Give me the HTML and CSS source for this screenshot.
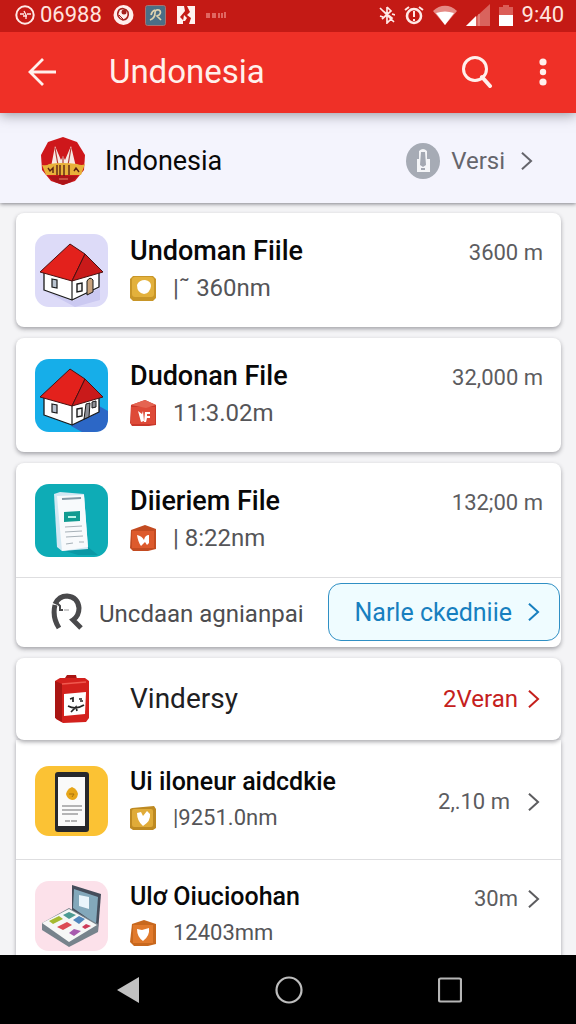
FILE: index.html
```html
<!DOCTYPE html>
<html lang="id">
<head>
<meta charset="utf-8">
<meta name="viewport" content="width=device-width, initial-scale=1">
<title>Undonesia</title>
<link rel="stylesheet" href="styles.css">
</head>
<body>
<svg class="defs" aria-hidden="true">
  <symbol id="chevron" viewBox="0 0 14 22"><path d="M2 2l10 9-10 9" fill="none" stroke="currentColor" stroke-width="2.200"/></symbol>
  <symbol id="house" viewBox="0 0 73 73">
    <path d="M9 36v20l28 10 27-13V35L49 22z" fill="#fff" stroke="#191919" stroke-width="1.3" stroke-linejoin="round"/>
    <path d="M37 47v19" stroke="#191919" stroke-width="1.2"/>
    <path d="M35 10l15 10-13 27L5 38z" fill="#e3211c" stroke="#4a1010" stroke-width="1"/>
    <path d="M50 20l18 18-31 9z" fill="#c91a1a" stroke="#4a1010" stroke-width="1"/>
    <path d="M17 45l5 1v8l-5-1z" fill="#b9c3cf" stroke="#191919" stroke-width="1.2"/>
    <path d="M42 50l5-1v8l-5 1z" fill="#f2f2f2" stroke="#191919" stroke-width="1.4"/>
  </symbol>
</svg>

<header class="top">
  <div class="status">
    <div class="status-left">
      <svg width="20" height="20" viewBox="0 0 20 20"><circle cx="10" cy="10" r="8.7" fill="none" stroke="#ffe9e6" stroke-width="2"/><path d="M5 9h4M12 9h4M9 6l2 4v4M8 11h4" fill="none" stroke="#ffe9e6" stroke-width="1.3"/></svg>
      <span class="status-text">06988</span>
      <svg class="push" width="21" height="20" viewBox="0 0 21 20"><circle cx="10.500" cy="10" r="10" fill="#ffeeec"/><path d="M6 5c-3 5 0 9 4 10 4 0 6-4 5-8-2-4-7-4-9-2z" fill="none" stroke="#a5201c" stroke-width="1.600"/><circle cx="11" cy="7" r="2.500" fill="#a5201c"/><path d="M6 10l4 4" stroke="#a5201c"/></svg>
      <svg class="push" width="21" height="21" viewBox="0 0 21 21"><rect x=".5" y=".5" width="20" height="20" rx="2" fill="#4b6f86" stroke="#a67472"/><path d="M5 15q5-2 5-7 0-4 4-3 3 2 0 5l-2 1 4 4" fill="none" stroke="#ddd3b0" stroke-width="1.700"/><path d="M6 10q1-4 4-5" fill="none" stroke="#ddd3b0" stroke-width="1.700"/></svg>
      <svg class="push" width="18" height="18" viewBox="0 0 18 18"><path fill="#fff2f0" d="M0 0h7l1 5-5 6 3 3v4H0zM10 0h8v18h-6l2-6-4-3 3-3z"/><path d="M7 9l3 3-2 3H6z" fill="#fff2f0"/></svg>
      <svg class="push" width="20" height="6" viewBox="0 0 20 6"><path d="M1 1v5M3 1v5M7 1v5M9 1v5M13 1v5M16 1v5M19 0v6" stroke="#f0908a" stroke-width="1.300"/></svg>
    </div>
    <div class="status-right">
      <svg width="16" height="18" viewBox="0 0 16 18"><path d="M1 2l14 14M8 1v16l5-5-9-7M8 1l4 4-9 8M1 10l3 1M13 8l3 1" fill="none" stroke="#ffe9e6" stroke-width="1.700"/></svg>
      <svg width="20" height="20" viewBox="0 0 20 20"><circle cx="10" cy="11" r="7" fill="none" stroke="#ffe9e6" stroke-width="2.600"/><path d="M1 5l4-3M19 5l-4-3M10 6v6M10 14v2" stroke="#ffe9e6" stroke-width="2"/></svg>
      <svg width="24" height="20" viewBox="0 0 24 20"><path d="M0 6c7-7 17-7 24 0L12 20z" fill="#e58a85"/><path d="M3 8c6-2 12-2 18 0l-9 12z" fill="#fff"/></svg>
      <svg width="24" height="22" viewBox="0 0 24 22"><path d="M24 0v22H0z" fill="#d9635d"/><path d="M10 12v10H0z" fill="#fff"/><path d="M13 10v12" stroke="#efa09b"/></svg>
      <svg width="14" height="21" viewBox="0 0 14 21"><path d="M4 0h6v2h4v9H0V2h4z" fill="#db5d57"/><path d="M0 10h14v11H0z" fill="#fff"/></svg>
      <span class="status-text">9:40</span>
    </div>
  </div>
  <div class="appbar">
    <button class="icon-btn" aria-label="Back"><svg width="28" height="28" viewBox="0 0 28 28"><path d="M15 1L2 14l13 13M2 14h26" fill="none" stroke="#fff0ec" stroke-width="2.800"/></svg></button>
    <h1 class="appbar-title">Undonesia</h1>
    <button class="icon-btn" aria-label="Search"><svg width="32" height="32" viewBox="0 0 32 32"><circle cx="14" cy="13" r="11.500" fill="none" stroke="#fff0ec" stroke-width="3"/><path d="M21 21l8 9" stroke="#fff0ec" stroke-width="4" stroke-linecap="round"/></svg></button>
    <button class="icon-btn menu-btn" aria-label="More"><svg width="8" height="28" viewBox="0 0 8 28"><g fill="#fff0ec"><circle cx="4" cy="4" r="3.600"/><circle cx="4" cy="14" r="3.200"/><circle cx="4" cy="24" r="3.600"/></g></svg></button>
  </div>
</header>

<section class="country">
  <svg width="46" height="48" viewBox="0 0 46 48"><path d="M23 0l14 5 8 13-1 15-9 11-12 4-12-4L2 33 1 18 8 5z" fill="#ce171b"/><path d="M11 30l4-21 6 14 2-4 2 4 6-14 5 21z" fill="#f7e9e4"/><path d="M15 11l3 17M23 20v8M31 11l-3 17" stroke="#b23b35" stroke-width="1.200"/><path d="M2 28q5 1 7-1 13-2 28 0 5 2 8 0l-4 11H6z" fill="#e8b13a"/><path d="M8 31l2 3 3-3v5M17 28v10M20 28v11M24 28v11M29 28v10M34 34l2-3 3 4" fill="none" stroke="#5c2214" stroke-width="1.400"/><path d="M8 39h30l-7 6-8 3-8-3z" fill="#ad1419"/><path d="M19 42h9" stroke="#e78a68"/></svg>
  <h2 class="country-name">Indonesia</h2>
  <button class="version"><svg width="34" height="36" viewBox="0 0 34 36"><ellipse cx="17" cy="18" rx="17" ry="18" fill="#a6abb5"/><path d="M13 8q4-4 8 0v8h3v13H11V16h2z" fill="#f4f5f8"/><path d="M15 9h4l1 13-3 2-3-2zM15 25h4v2h-4z" fill="#a3a8b2"/></svg>Versi<svg class="chev chev-version"><use href="#chevron"/></svg></button>
</section>

<main class="list">
  <article class="card">
    <div class="row">
      <svg class="app" viewBox="0 0 73 73"><rect width="73" height="73" rx="14" fill="#dddbf8"/><path d="M12 58l26 9 27-13v12L40 73z" fill="#cbc9f1"/><use href="#house"/><path d="M52 61V47q3-5 6-1v12z" fill="#c8a27c" stroke="#191919"/></svg>
      <div class="info"><h3 class="name">Undoman Fiile</h3>
        <p class="meta"><svg class="badge" viewBox="0 0 26 26"><path d="M3 1h20l3 3v19l-3 3H3l-3-3V4z" fill="#c89628"/><rect x="2" y="2" width="22" height="20" rx="3" fill="#e3b13c"/><path d="M7 10q2-5 8-5 6 1 6 6-1 7-7 8-7-1-7-9z" fill="#fff"/></svg>|˜ 360nm</p></div>
      <span class="size">3600 m</span>
    </div>
  </article>

  <article class="card">
    <div class="row">
      <svg class="app" viewBox="0 0 73 73"><rect width="73" height="73" rx="14" fill="#16aee9"/><path d="M36 67l28-20 9 5v7q0 14-14 14H47z" fill="#2c67c6"/><use href="#house"/><path d="M49 60l2-15 4-1-1 14zM57 43l4-1v6l-4 1z" fill="#8d8f96" stroke="#191919"/></svg>
      <div class="info"><h3 class="name">Dudonan File</h3>
        <p class="meta"><svg class="badge" viewBox="0 0 26 26"><path d="M1 5l14-5 11 5v20l-7 1H2l-2-3z" fill="#c9372a"/><path d="M1 7h24v17H1z" fill="#de4a38"/><path d="M1 5l14-5 11 5-10 3z" fill="#e56451"/><path d="M8 11l4 3 1-3 1 10-3 1zM15 12h5v2h-3v2h3v2h-3l-1 4h-2z" fill="#fff"/></svg>11:3.02m</p></div>
      <span class="size">32,000 m</span>
    </div>
  </article>

  <article class="card">
    <div class="row">
      <svg class="app" viewBox="0 0 73 73"><rect width="73" height="73" rx="14" fill="#0eacb6"/><path d="M27 66l26-3 10 8H43z" fill="#0a98a5"/><path d="M19 10l6-2 24 2 4 55-26 2-5-4z" fill="#d2e8f3"/><path d="M22 12l27-1 4 52-26 4z" fill="#f8fafc"/><path d="M27 15l19-1" stroke="#8499a6" stroke-width="2"/><path d="M29 28l16-1v10l-16 1z" fill="#119b91"/><path d="M33 33h8" stroke="#b9f3e9" stroke-width="2"/><path d="M30 43l17-1M30 48l17-1M31 53l17-1M31 60l7-1M44 58h5" stroke="#a7b1b8" stroke-width="1.200"/></svg>
      <div class="info"><h3 class="name">Diieriem File</h3>
        <p class="meta"><svg class="badge" viewBox="0 0 26 26"><path d="M1 5l14-5 11 4v20l-8 2H3l-3-3z" fill="#c34b21"/><path d="M2 6h22v17H2z" fill="#dd5a2c"/><path d="M7 10q5 1 7 5 1-5 5-5v8l-2 2-2-3-4 4q-3-4-4-11z" fill="#fff"/></svg>| 8:22nm</p></div>
      <span class="size">132;00 m</span>
    </div>
    <div class="card-foot">
      <svg width="32" height="38" viewBox="0 0 32 38"><path d="M8 35Q1 24 4 12M4 11Q8 3 16 3q11 1 12 12 0 8-6 12l8 8" fill="none" stroke="#49494b" stroke-width="5"/><path d="M5 9l4 4v4h3" fill="none" stroke="#49494b" stroke-width="2"/><path d="M13 17h5" stroke="#9a9a9c"/></svg>
      <span class="foot-text">Uncdaan agnianpai</span>
      <button class="action">Narle ckedniie<svg class="chev"><use href="#chevron"/></svg></button>
    </div>
  </article>

  <article class="card card-over">
    <div class="row row-single">
      <span class="slot"><svg width="36" height="50" viewBox="0 0 36 50"><path d="M11 4l2-3h9l1 4z" fill="#a91513"/><path d="M1 7l5-3h25l4 3v37l-3 4-23 1-7-4z" fill="#d3211d"/><path d="M1 7l7 3v38l-7-4z" fill="#a91513"/><path d="M8 10l24-2" stroke="#f0594f" stroke-width="1.500"/><path d="M10 20l22-2-1 22-21 2z" fill="#fff"/><path d="M16 25l3-1v4M25 25h3M26 27h3M14 32q8 4 16-1M17 38l5-5 1 4M20 34l-4-1" fill="none" stroke="#252525" stroke-width="1.700"/></svg></span>
      <h3 class="name name-light">Vindersy</h3>
      <a class="veran" href="#veran">2Veran<svg class="chev"><use href="#chevron"/></svg></a>
    </div>
  </article>

  <article class="card card-under">
    <div class="row row-tight">
      <svg class="app app-short" viewBox="0 0 73 70"><rect width="73" height="70" rx="14" fill="#fbc234"/><rect x="20" y="6" width="34" height="60" rx="3" fill="#27282c"/><rect x="23" y="11" width="27" height="49" fill="#fafafa"/><path d="M37 21q5 2 6 7-1 6-6 6-5-1-6-6 1-5 6-7z" fill="#e7a61a"/><path d="M34 28h5l-2 3" fill="none" stroke="#a87311"/><path d="M27 40h20M27 44h20M27 48h16M30 55h5M36 55h6" stroke="#9d9d9f" stroke-width="1.300"/></svg>
      <div class="info"><h3 class="name name-small">Ui iloneur aidcdkie</h3>
        <p class="meta meta-small"><svg class="badge" viewBox="0 0 26 26"><path d="M2 3l22-2 2 3v19l-3 2H3l-3-2V4z" fill="#be8a22"/><rect x="2" y="4" width="21" height="18" rx="2" fill="#e0ab38"/><path d="M7 8l4-1 2 4 4-5 3 3q1 7-7 12Q7 16 7 8z" fill="#fff"/></svg>|9251.0nm</p></div>
      <a class="size size-link size-middle" href="#uiloneur">2,.10 m<svg class="chev chev-far"><use href="#chevron"/></svg></a>
    </div>
    <div class="row row-tight row-next">
      <svg class="app app-short" viewBox="0 0 73 70"><rect width="73" height="70" rx="14" fill="#fce1ea"/><path d="M37 4l29 9-3 38-26-22z" fill="#454d5b"/><path d="M39 8l24 8-2 27-23-16z" fill="#83a8bb"/><path d="M44 14l10 2v12l-10-3z" fill="#e9f4fb"/><path d="M7 42l27-15 29 16v8L34 66 7 49z" fill="#77838c"/><path d="M7 42l27-14 28 16-28 17z" fill="#f6f7f6"/><path d="M14 40l10-5 4 3-10 5z" fill="#a5ba2f"/><path d="M28 34l6-3 7 3-7 4z" fill="#4d9b93"/><path d="M22 46l10-5 5 3-9 5z" fill="#dc4b54"/><path d="M38 39l6-4 6 3-6 5z" fill="#5087bd"/><path d="M34 52l5-4 7 2-7 5z" fill="#a75aae"/><path d="M47 46l4-3 5 2-6 3z" fill="#ce3c59"/></svg>
      <div class="info"><h3 class="name name-small">Ulơ Oiucioohan</h3>
        <p class="meta meta-small"><svg class="badge" viewBox="0 0 26 26"><path d="M2 4l12-4 12 4v20l-8 2H4l-4-4z" fill="#c8681e"/><path d="M3 5h20v18H3z" fill="#e17a2c"/><path d="M7 9l5 1 7-2q1 8-6 13-6-4-6-12z" fill="#fff"/></svg>12403mm</p></div>
      <a class="size size-link" href="#ulo">30m<svg class="chev"><use href="#chevron"/></svg></a>
    </div>
  </article>
</main>

<nav class="navbar" aria-label="System">
  <button class="icon-btn" aria-label="Back"><svg width="24" height="28" viewBox="0 0 24 28"><path d="M23 1v26L1 14z" fill="#c1c1c1"/></svg></button>
  <button class="icon-btn" aria-label="Home"><svg width="28" height="28" viewBox="0 0 28 28"><circle cx="14" cy="14" r="12.500" fill="none" stroke="#bdbdbd" stroke-width="2.200"/></svg></button>
  <button class="icon-btn" aria-label="Recent"><svg width="24" height="26" viewBox="0 0 24 26"><rect x="1" y="1.500" width="22" height="23" rx="1.500" fill="none" stroke="#b5b5b5" stroke-width="2.200"/></svg></button>
</nav>
</body>
</html>
```
FILE: styles.css
```css
* { box-sizing: border-box; }

body {
  margin: 0;
  height: 100vh;
  display: flex;
  flex-direction: column;
  overflow: hidden;
  background: #f4f4f6;
  color: #080808;
  font-family: Roboto, "Liberation Sans", sans-serif;
}

h1, h2, h3, p { margin: 0; font-weight: 400; }
svg { display: block; flex: none; }
button, a { font: inherit; color: inherit; text-decoration: none; }
button { border: 0; padding: 0; background: none; cursor: pointer; }

.defs { position: absolute; width: 0; height: 0; }

.top {
  flex: none;
  z-index: 2;
  background: #ef3027;
  box-shadow: 0 2px 12px rgba(60, 60, 70, 0.5);
}

.status {
  height: 32px;
  padding: 0 12px 2px 15px;
  display: flex;
  justify-content: space-between;
  align-items: center;
  background: #c41a15;
  color: #ffe3df;
}

.status-left { display: flex; align-items: center; gap: 5px; }
.status-right { display: flex; align-items: center; gap: 9px; }
.status-text { font-size: 22px; line-height: 24px; }
.push { margin-left: 6px; }

.appbar {
  height: 81px;
  padding: 0 29px 2px 28px;
  display: flex;
  align-items: center;
  color: #fff0ec;
}

.appbar-title {
  flex: 1;
  margin-left: 53px;
  font-size: 33px;
  line-height: 40px;
}

.icon-btn { display: flex; align-items: center; justify-content: center; }
.menu-btn { margin-left: 46px; }

.country {
  flex: none;
  z-index: 1;
  height: 90px;
  padding: 5px 43px 0 40px;
  display: flex;
  align-items: center;
  background: #f4f4fd;
  box-shadow: 0 1px 4px rgba(50, 50, 60, 0.6);
}

.country-name {
  flex: 1;
  margin-left: 19px;
  font-size: 27px;
  line-height: 36px;
}

.version {
  display: flex;
  align-items: center;
  gap: 11px;
  font-size: 24px;
  line-height: 32px;
  color: #65656c;
}

.list {
  flex: 1;
  min-height: 0;
  overflow-y: auto;
  scrollbar-width: none;
  padding: 10px 15px 0 16px;
  display: flex;
  flex-direction: column;
  gap: 11px;
}

.card {
  flex: none;
  background: #fff;
  border-radius: 8px;
  box-shadow: 0 2px 4px rgba(40, 40, 50, 0.4);
}

.card-over { z-index: 1; }
.card-under { margin-top: -11px; border-radius: 0; padding-top: 11px; }

.row {
  display: flex;
  align-items: flex-start;
  padding: 21px 18px 20px 19px;
}

.app { width: 73px; height: 73px; }
.app-short { height: 70px; }

.info { flex: 1; min-width: 0; margin-left: 22px; }

.name {
  font-size: 27px;
  line-height: 34px;
  font-weight: 500;
  white-space: nowrap;
}

.name-small { font-size: 25px; line-height: 32px; }

.meta {
  display: flex;
  align-items: center;
  gap: 17px;
  margin-top: 3px;
  font-size: 24px;
  line-height: 34px;
  color: #555558;
  white-space: nowrap;
}

.meta-small { font-size: 22px; }

.badge { width: 26px; height: 26px; }

.size {
  margin-top: 5px;
  font-size: 22px;
  line-height: 28px;
  color: #5c5c5f;
  white-space: nowrap;
}

.size-link { display: flex; align-items: center; gap: 9px; }
.size-middle { margin-top: 22px; }
.chev { width: 13px; height: 20px; }
.chev-far { margin-left: 8px; }
.chev-version { margin-left: 4px; }

.card-foot {
  display: flex;
  align-items: center;
  padding: 5px 1px 6px 35px;
  border-top: 1px solid #dedee0;
}

.foot-text {
  flex: 1;
  margin-left: 16px;
  padding-top: 3px;
  font-size: 24px;
  line-height: 32px;
  color: #4d4d50;
  white-space: nowrap;
}

.action {
  height: 58px;
  padding: 0 19px 0 25px;
  display: flex;
  align-items: center;
  gap: 15px;
  border: 1px solid #2f8fc4;
  border-radius: 13px;
  background: #effcff;
  color: #177fbf;
  font-size: 25px;
  white-space: nowrap;
}

.row-single { align-items: center; padding: 16px 21px 16px 19px; }
.slot { width: 73px; display: flex; justify-content: center; }
.name-light { flex: 1; margin-left: 22px; font-size: 28px; font-weight: 400; color: #202022; }

.veran {
  display: flex;
  align-items: center;
  gap: 9px;
  font-size: 24px;
  line-height: 32px;
  color: #c5201c;
}

.row-tight { padding: 15px 21px 23px 19px; }
.row-next { border-top: 1px solid #dedee0; padding-top: 21px; }
.row-next .size { margin-top: 4px; }

.navbar {
  flex: none;
  z-index: 1;
  height: 69px;
  padding: 0 114px 0 116px;
  display: flex;
  align-items: center;
  justify-content: space-between;
  background: #000;
}
```
